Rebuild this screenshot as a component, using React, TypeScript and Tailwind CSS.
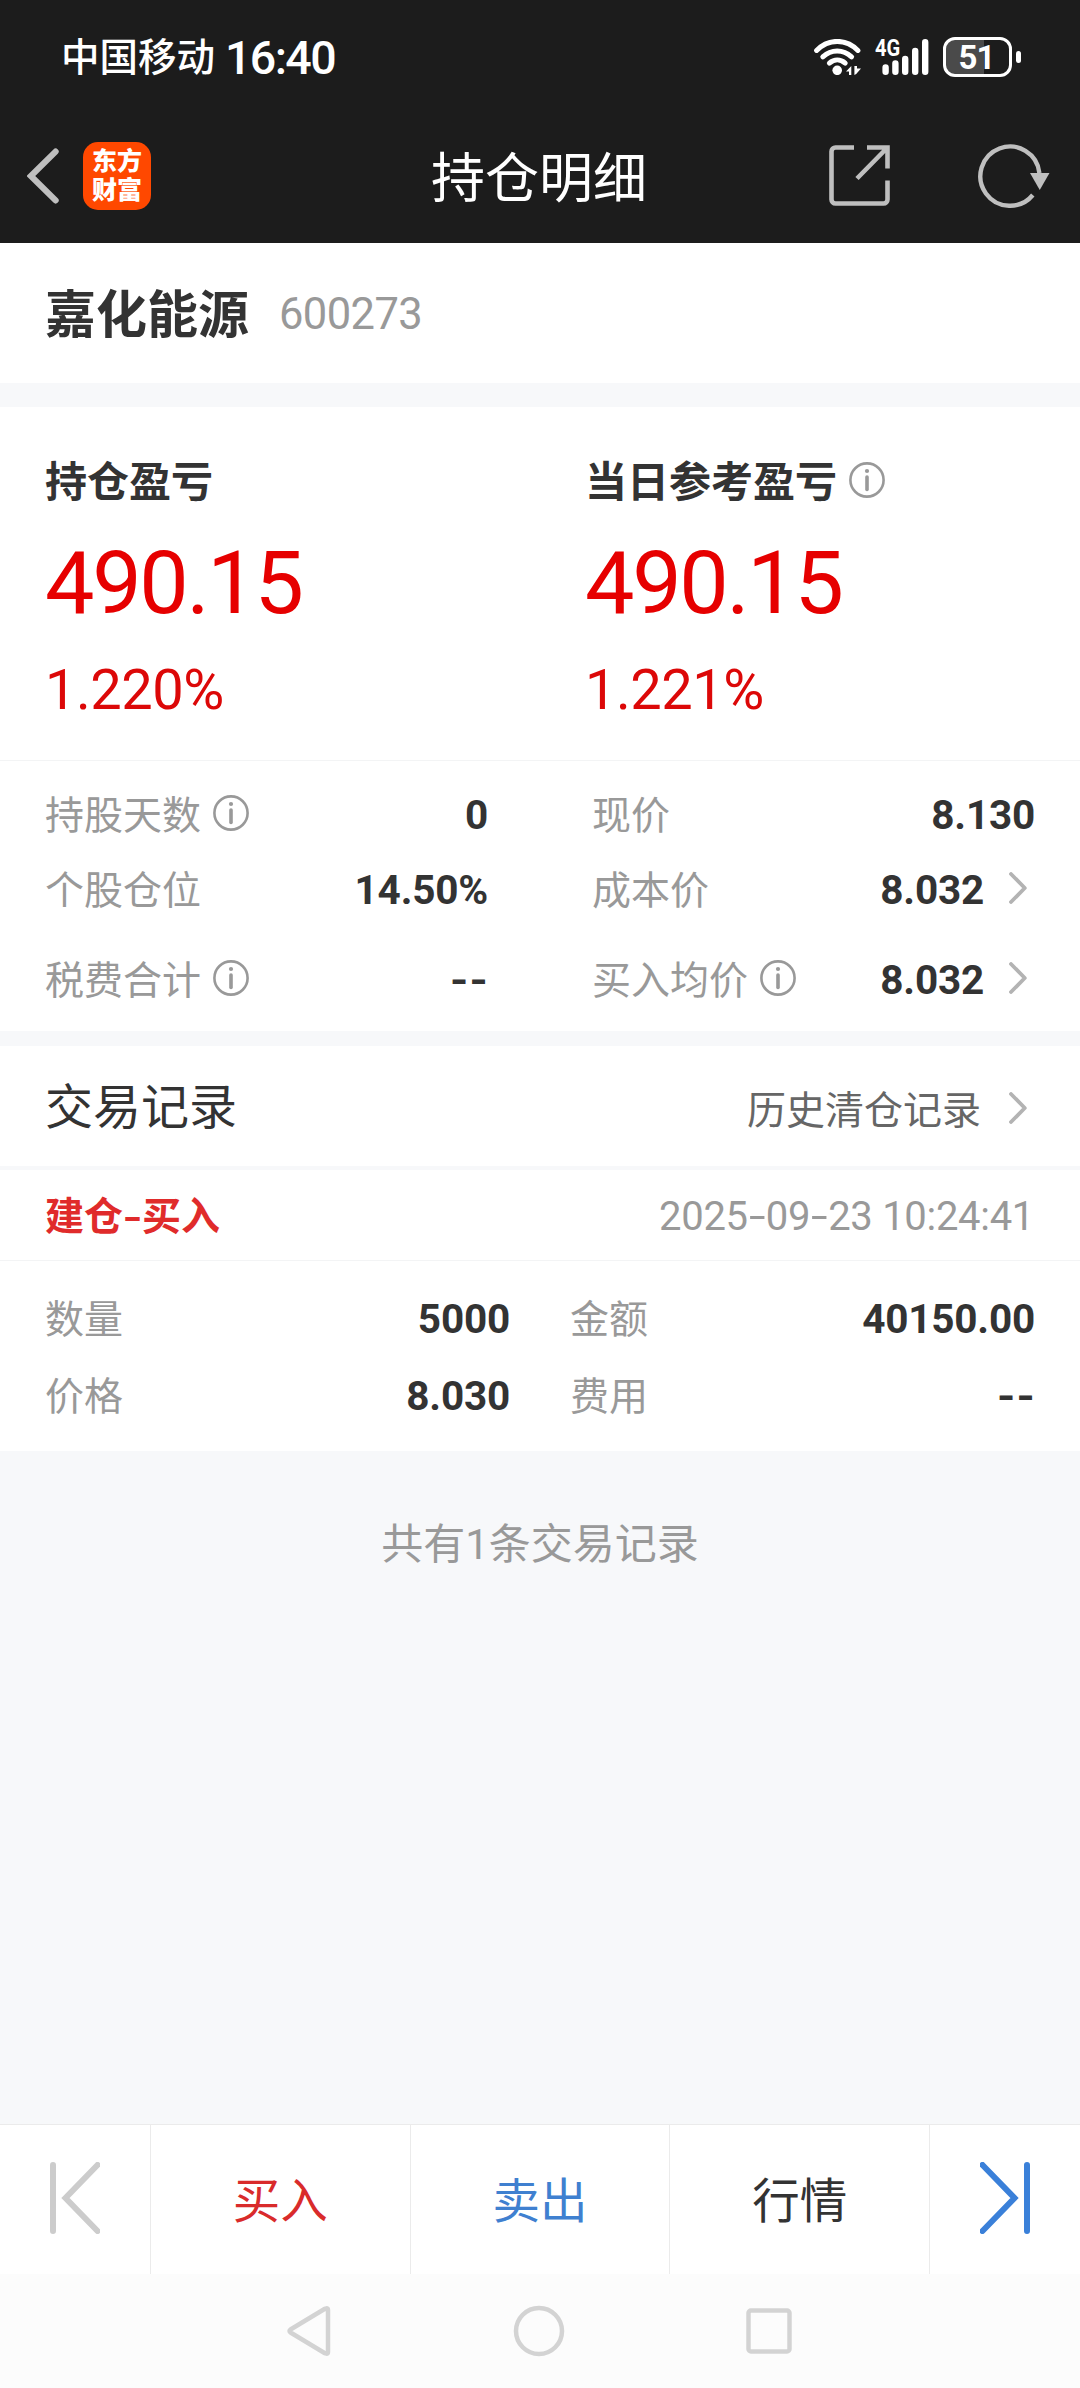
import type { ReactNode } from 'react';
import clsx from 'clsx';

const stats = [
  {
    height: 'h-[75px]',
    left: { label: '持股天数', value: '0', info: true },
    right: { label: '现价', value: '8.130' },
  },
  {
    height: 'h-[75px]',
    left: { label: '个股仓位', value: '14.50%' },
    right: { label: '成本价', value: '8.032', link: true },
  },
  {
    height: 'h-[105px]',
    left: { label: '税费合计', value: '--', info: true },
    right: { label: '买入均价', value: '8.032', info: true, link: true },
  },
];

const details = [
  [{ label: '数量', value: '5000' }, { label: '金额', value: '40150.00' }],
  [{ label: '价格', value: '8.030' }, { label: '费用', value: '--' }],
];

const actions = [
  { label: '买入', color: 'text-[#d92b2b]' },
  { label: '卖出', color: 'text-[#3f80d0]' },
  { label: '行情', color: 'text-[#333333]' },
];

function InfoIcon() {
  return (
    <svg className="mt-[2px] ml-3 h-9 w-9 shrink-0" viewBox="0 0 36 36" fill="none" stroke="#999999">
      <circle cx="18" cy="18" r="16.6" strokeWidth="2.6" />
      <path d="M18 15v12.5" strokeWidth="3.6" strokeLinecap="round" />
      <circle cx="18" cy="9" r="2.1" fill="#999999" stroke="none" />
    </svg>
  );
}

function ChevronIcon() {
  return (
    <svg className="mt-[2px] mr-2 h-8 w-[18px] shrink-0" viewBox="0 0 18 32" fill="none" stroke="#b3b3b3" strokeWidth="3.8" strokeLinecap="round" strokeLinejoin="round">
      <path d="M2 2l13.8 14L2 30" />
    </svg>
  );
}

function StatusBar() {
  return (
    <div className="flex h-[110px] items-center justify-between pr-[59px] pl-[61px] text-white">
      <div className="flex items-center font-medium">
        <span className="text-[38.5px]">中国移动</span>
        <span className="mt-[6px] ml-[10px] font-['Roboto',sans-serif] text-[46.5px] leading-none tracking-[-1.6px]">16:40</span>
      </div>
      <div className="mt-[4px] flex items-center">
        <svg className="h-9 w-[47px]" viewBox="0 0 47 36" fill="none" stroke="#ffffff" strokeLinecap="round">
          <path d="M2.6 11.4C14.5-.6 32-.6 43.9 11.4" strokeWidth="5" />
          <path d="M8.8 17.8c8.4-7.8 20.4-7.8 28.8 0" strokeWidth="5" />
          <path d="M15.4 24.2c4.8-4.2 11-4.2 15.8 0" strokeWidth="5" />
          <circle cx="23.2" cy="31.3" r="4.8" fill="#ffffff" stroke="none" />
          <path d="M37.3 27v9h-2.300v-3.500h-3zM40.4 27v9l1.800-1 4.800-5.500h-4V27z" fill="#ffffff" stroke="none" />
        </svg>
        <div className="relative ml-[14px] h-9 w-[54px]">
          <svg className="h-9 w-[54px]" viewBox="0 0 54 36" stroke="#ffffff" strokeWidth="6.4" strokeLinecap="round">
            <path d="M10.6 28.4v4.4M20.4 24.4v8.4M30.2 20v12.8M40.2 12v20.8M50.2 3.2v29.6" />
          </svg>
          <span className="absolute -top-[3px] left-0 origin-left scale-x-[0.82] font-['Roboto',sans-serif] text-[24.5px] leading-[24px] font-bold">4G</span>
        </div>
        <div className="ml-[14px] flex h-10 w-[69px] items-center justify-center rounded-[12px] border-[3px] border-white bg-[linear-gradient(90deg,#4a4a4a_60%,transparent_60%)]">
          <span className="-ml-[2px] font-['Roboto',sans-serif] text-[33px] leading-none font-bold tracking-[-1px]">51</span>
        </div>
        <div className="ml-1 h-3 w-[5px] rounded-full bg-white" />
      </div>
    </div>
  );
}

function TitleBar() {
  return (
    <div className="grid h-[133px] grid-cols-[1fr_auto_1fr] items-center pr-[29px] pb-[2px] pl-[27px]">
      <div className="flex items-center">
        <svg className="h-[56px] w-8" viewBox="0 0 32 56" fill="none" stroke="#bfbfbf" strokeWidth="6.2" strokeLinecap="round">
          <path d="M28.6 3.6L3.8 28l24.8 24.4" strokeLinejoin="miter" />
        </svg>
        <div className="ml-6 flex h-[68px] w-[68px] flex-col items-center justify-center rounded-[15px] bg-[#ff4800] pb-[3px] text-[25px] leading-[29px] font-black text-white">
          <span>东方</span>
          <span>财富</span>
        </div>
      </div>
      <h1 className="pb-[2px] text-[54px] leading-none text-white">持仓明细</h1>
      <div className="flex items-center justify-end">
        <svg className="h-[61px] w-[61px]" viewBox="0 0 61 61" fill="none" stroke="#bfbfbf" strokeWidth="4.6">
          <path d="M25 2.5H6.5a4 4 0 0 0-4 4v48a4 4 0 0 0 4 4h48a4 4 0 0 0 4-4V35.5" />
          <path d="M38 2.5h20.5V23.5M58 3L28 33.5" />
        </svg>
        <svg className="mr-px ml-[88px] h-16 w-[72px]" viewBox="0 0 72 64" fill="none" stroke="#bfbfbf" strokeWidth="4.4">
          <path d="M54.8 51A29.6 29.6 0 1 1 61.4 29" />
          <path d="M52 29h19.5l-9.75 17z" fill="#bfbfbf" stroke="none" />
        </svg>
      </div>
    </div>
  );
}

function ProfitBlock({ label, amount, percent, info }: { label: string; amount: string; percent: string; info?: boolean }) {
  return (
    <div className="w-1/2 pl-[45px]">
      <div className="flex h-[42px] items-center text-[42px] leading-none font-bold text-[#333333]">
        {label}
        {info && <InfoIcon />}
      </div>
      <div className="font-['Roboto',sans-serif]">
        <div className="mt-[40px] h-[86px] text-[88px] leading-[86px] tracking-[-2.3px] text-[#e60000]">{amount}</div>
        <div className="mt-[37px] h-[54px] text-[56px] leading-[54px] tracking-[-0.5px] text-[#dc0808]">{percent}</div>
      </div>
    </div>
  );
}

function Field({ label, value, info, link, className }: { label: string; value: string; info?: boolean; link?: boolean; className?: string }) {
  return (
    <div className={clsx('flex items-center text-[39px] leading-none', className)}>
      <span className="pt-px text-[#999999]">{label}</span>
      {info && <InfoIcon />}
      <span
        className={clsx(
          "mt-2 ml-auto font-['Roboto',sans-serif] text-[40.5px] font-bold text-[#333333]",
          value === '--' ? '-mr-px origin-right scale-x-[1.15] tracking-[1px]' : 'tracking-[-0.2px]',
        )}
      >
        {value}
      </span>
      {link && (
        <span className="ml-[25px]">
          <ChevronIcon />
        </span>
      )}
    </div>
  );
}

function FooterCell({ children, className }: { children: ReactNode; className?: string }) {
  return <div className={clsx('flex items-center justify-center pb-1', className)}>{children}</div>;
}

export default function App() {
  return (
    <div className="flex h-[2388px] w-[1080px] flex-col overflow-hidden bg-[#f7f8fa] font-['Noto_Sans_CJK_SC',sans-serif]">
      <header className="h-[243px] bg-[#1c1c1c]">
        <StatusBar />
        <TitleBar />
      </header>

      <section className="flex h-[140px] items-center bg-white pb-1 pl-[45px] leading-none">
        <span className="text-[51px] font-bold text-[#333333]">嘉化能源</span>
        <span className="mt-[8px] ml-[30px] font-['Roboto',sans-serif] text-[43.5px] tracking-[-0.6px] text-[#999999]">600273</span>
      </section>

      <section className="mt-6 bg-white">
        <div className="flex h-[354px] border-b border-[#f3f4f5] pt-[51px]">
          <ProfitBlock label="持仓盈亏" amount="490.15" percent="1.220%" />
          <ProfitBlock label="当日参考盈亏" amount="490.15" percent="1.221%" info />
        </div>
        <div className="pt-[13px] pr-[45px] pb-[2px] pl-[45px]">
          {stats.map((row) => (
            <div key={row.left.label} className={clsx('flex justify-between', row.height)}>
              <Field className="w-[443px]" {...row.left} />
              <Field className="w-[443px]" {...row.right} />
            </div>
          ))}
        </div>
      </section>

      <section className="mt-[15px] flex h-[120px] items-center justify-between bg-white px-[45px] pb-[6px] leading-none">
        <h2 className="text-[48px] text-[#333333]">交易记录</h2>
        <div className="flex items-center pt-2 text-[39px] text-[#666666]">
          历史清仓记录
          <span className="ml-[28px]">
            <ChevronIcon />
          </span>
        </div>
      </section>

      <section className="mt-1 bg-white">
        <div className="flex h-[91px] items-center justify-between border-b border-[#f3f4f5] pr-[46px] pb-1 pl-[45px] text-[39px] leading-none">
          <span className="font-bold text-[#e02b2b]">
            建仓<span className="inline-block w-[19px] scale-x-[1.35] text-center">-</span>买入
          </span>
          <span className="mt-[7px] font-['Roboto',sans-serif] text-[40px] tracking-[-0.3px] text-[#999999]">
            2025<span className="inline-block w-[18px] scale-x-[1.5] text-center">-</span>09
            <span className="inline-block w-[18px] scale-x-[1.5] text-center">-</span>23 10:24:41
          </span>
        </div>
        <div className="px-[45px] pt-4 pb-5">
          {details.map(([left, right]) => (
            <div key={left.label} className="flex h-[77px] justify-between">
              <Field className="w-[465px]" {...left} />
              <Field className="w-[465px]" {...right} />
            </div>
          ))}
        </div>
      </section>

      <p className="pt-[69px] text-center text-[42px] leading-none text-[#999999]">
        共有<span className="font-['Roboto',sans-serif] leading-[0]">1</span>条交易记录
      </p>

      <footer className="mt-auto">
        <div className="flex h-[150px] border-t border-[#ebebeb] bg-white">
          <FooterCell className="w-[150px]">
            <svg className="h-[72px] w-[50px]" viewBox="0 0 50 72" fill="none" stroke="#cccccc" strokeWidth="6" strokeLinecap="round">
              <path d="M3 3v66M47.5 3L15.5 36l32 33" />
            </svg>
          </FooterCell>
          {actions.map((action) => (
            <FooterCell key={action.label} className={clsx('flex-1 border-l border-[#ebebeb] text-[47.5px] leading-none', action.color)}>
              {action.label}
            </FooterCell>
          ))}
          <FooterCell className="w-[151px] border-l border-[#ebebeb]">
            <svg className="h-[72px] w-[50px]" viewBox="0 0 50 72" fill="none" stroke="#3a80d9" strokeWidth="6" strokeLinecap="round">
              <path d="M47 3v66M2.5 3l32 33-32 33" />
            </svg>
          </FooterCell>
        </div>
        <nav className="flex h-[114px] items-center justify-between bg-[#fcfcfc] pr-[288px] pl-[287px]">
          <svg className="h-[52px] w-11" viewBox="0 0 44 52" fill="none" stroke="#d3d3d3" strokeWidth="4.5" strokeLinejoin="round">
            <path d="M39.7 3.3Q41 3.5 41 5V47Q41 48.5 39.7 48.7L37.5 48L3.5 27.5Q1.5 26 3.5 24.5L37.5 4Z" />
          </svg>
          <svg className="h-[52px] w-[52px]" viewBox="0 0 52 52" fill="none" stroke="#d3d3d3" strokeWidth="4.5">
            <circle cx="26" cy="26" r="23" />
          </svg>
          <svg className="h-[46px] w-[46px]" viewBox="0 0 46 46" fill="none" stroke="#d3d3d3" strokeWidth="4.5">
            <rect x="2.5" y="2.5" width="41" height="41" rx="2.5" />
          </svg>
        </nav>
      </footer>
    </div>
  );
}
